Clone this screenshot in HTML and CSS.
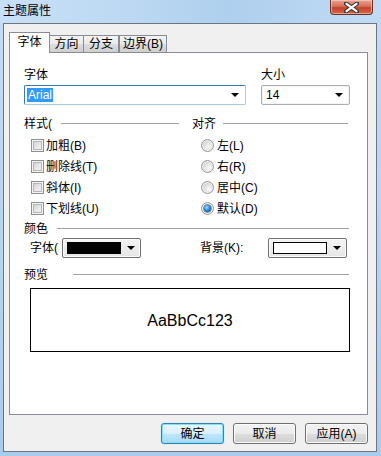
FILE: index.html
```html
<!DOCTYPE html>
<html>
<head>
<meta charset="utf-8">
<link rel="stylesheet" href="styles.css">
</head>
<body>
<div class="window">
  <div class="titlebar">
    <span class="title">主题属性</span>
    <div class="close"><svg width="15" height="11" viewBox="0 0 15 11"><path d="M2 1.5 L13 9.5 M13 1.5 L2 9.5" stroke="#3a3a3a" stroke-width="4.2" stroke-linecap="round"/><path d="M2.5 1.8 L12.5 9.2 M12.5 1.8 L2.5 9.2" stroke="#ffffff" stroke-width="2.2" stroke-linecap="round"/></svg></div>
  </div>
  <div class="client">
    <div class="tabs">
      <div class="tab active">字体</div>
      <div class="tab t2">方向</div>
      <div class="tab t3">分支</div>
      <div class="tab t4">边界(B)</div>
    </div>
    <div class="panel">
      <div class="row1">
        <div class="field">
          <div class="label">字体</div>
          <div class="combo focus"><span class="sel">Arial</span><span class="arrow"></span></div>
        </div>
        <div class="field">
          <div class="label">大小</div>
          <div class="combo"><span class="val">14</span><span class="arrow"></span></div>
        </div>
      </div>
      <div class="row2">
        <div class="col left">
          <div class="header"><span>样式(</span><i class="rule"></i></div>
          <div class="opt"><span class="check"></span>加粗(B)</div>
          <div class="opt"><span class="check"></span>删除线(T)</div>
          <div class="opt"><span class="check"></span>斜体(I)</div>
          <div class="opt"><span class="check"></span>下划线(U)</div>
        </div>
        <div class="col right">
          <div class="header"><span>对齐</span><i class="rule"></i></div>
          <div class="opt"><span class="radio"></span>左(L)</div>
          <div class="opt"><span class="radio"></span>右(R)</div>
          <div class="opt"><span class="radio"></span>居中(C)</div>
          <div class="opt"><span class="radio on"></span>默认(D)</div>
        </div>
      </div>
      <div class="header wide"><span>颜色</span><i class="rule"></i></div>
      <div class="colors">
        <div class="cgroup left">
          <span class="clabel">字体(</span>
          <div class="ccombo"><span class="swatch black"></span><span class="arrow"></span></div>
        </div>
        <div class="cgroup right">
          <span class="clabel">背景(K):</span>
          <div class="ccombo"><span class="swatch white"></span><span class="arrow"></span></div>
        </div>
      </div>
      <div class="header preview-h"><span>预览</span><i class="rule"></i></div>
      <div class="preview">AaBbCc123</div>
    </div>
    <div class="buttons">
      <div class="btn default">确定</div>
      <div class="btn">取消</div>
      <div class="btn">应用(A)</div>
    </div>
  </div>
</div>
</body>
</html>
```
FILE: styles.css
```css
* { box-sizing: border-box; }
html, body { margin: 0; padding: 0; }
body {
  width: 381px;
  height: 456px;
  overflow: hidden;
  font-family: "Liberation Sans", "Noto Sans CJK SC", sans-serif;
  font-size: 12px;
  color: #000;
  background: linear-gradient(180deg, #c3dcf4 0%, #bcd6f1 40%, #a9cbec 100%);
}
.window { width: 381px; height: 456px; display: flex; flex-direction: column; }
.titlebar {
  height: 23px;
  display: flex;
  justify-content: space-between;
  align-items: flex-start;
  background: linear-gradient(90deg, #c8e0f7 0%, #bcd8f2 35%, #aecfee 60%, #c2dbf4 100%);
}
.title { margin: 3px 0 0 3px; line-height: 16px; font-size: 12px; }
.close {
  width: 43px; height: 15px; margin-right: 8px;
  border: 1px solid #6b2d25; border-top: none;
  border-radius: 0 0 4px 4px;
  background: linear-gradient(180deg, #e6a493 0%, #d8705a 45%, #c3432a 55%, #d3654b 100%);
  box-shadow: inset 0 0 0 1px rgba(255,220,210,0.55);
  display: flex; align-items: center; justify-content: center;
}
.client {
  margin: 0 4px 4px 3px;
  height: 429px;
  border: 1px solid #6d7580;
  background: #f0f0f0;
  padding: 8px 8px 0 5px;
  display: flex; flex-direction: column;
}
.tabs { display: flex; align-items: flex-end; height: 21px; margin-bottom: -1px; position: relative; z-index: 1; }
.tab {
  height: 18px;
  border: 1px solid #898c95;
  background: linear-gradient(180deg, #f3f3f3 0%, #ebebeb 50%, #dddddd 51%, #cfcfcf 100%);
  display: flex; align-items: center; justify-content: center;
  line-height: 14px;
  padding-bottom: 1px;
}
.tab.active {
  height: 21px; width: 41px;
  background: #fff;
  border-bottom: none;
  position: relative; z-index: 2;
  padding-bottom: 2px;
}
.t2 { width: 35px; margin-left: -1px; }
.t3 { width: 36px; margin-left: -1px; }
.t4 { width: 48px; margin-left: 0; }
.panel {
  height: 363px;
  border: 1px solid #898c95;
  background: #fff;
  padding: 15px 17px 0 14px;
  display: flex; flex-direction: column;
}
.row1 { display: grid; grid-template-columns: 222px 1fr; column-gap: 15px; }
.label { line-height: 14px; height: 14px; margin-bottom: 3px; }
.combo {
  height: 20px;
  border: 1px solid #abadb3;
  border-top-color: #abadb3;
  border-radius: 2px;
  background: #fff;
  display: flex; align-items: center;
  padding: 0 6px 0 2px;
  box-shadow: inset 0 0 0 1px #f2f4f7;
}
.combo.focus { border-color: #3d7bad; border-bottom-color: #a4c9e3; border-right-color: #a4c9e3; box-shadow: none; }
.sel { background: #3399ff; color: #fff; padding: 0 1px; line-height: 14px; }
.val { padding-left: 2px; line-height: 14px; }
.arrow {
  margin-left: auto;
  width: 0; height: 0;
  border-left: 4px solid transparent;
  border-right: 4px solid transparent;
  border-top: 4px solid #000;
}
.row2 { display: grid; grid-template-columns: 168px 1fr; margin-top: 12px; }
.header { display: flex; align-items: center; height: 14px; line-height: 14px; }
.header span { white-space: nowrap; }
.rule { flex: 1; height: 1px; background: #a0a0a0; margin-top: -2px; }
.left .header .rule { margin-left: 9px; margin-right: 13px; }
.right .header .rule { margin-left: 7px; margin-right: 2px; }
.left .header + .opt, .right .header + .opt { margin-top: 4px; }
.opt { height: 21px; display: flex; align-items: center; line-height: 14px; }
.left .opt { padding-left: 7px; }
.right .opt { padding-left: 9px; }
.check {
  width: 13px; height: 13px; margin-right: 2px;
  border: 1px solid #8e8f8f;
  background: linear-gradient(135deg, #c9c9c9 0%, #e6e6e6 50%, #f7f7f7 100%);
  box-shadow: inset 0 0 0 1px #f4f4f4, inset 0 0 0 2px #b7b7b7;
}
.radio {
  width: 13px; height: 13px; margin-right: 3px;
  border-radius: 50%;
  border: 1px solid #9a9a9a;
  background: radial-gradient(circle at 65% 65%, #fbfbfb 0%, #e2e2e2 45%, #bdbdbd 100%);
  box-shadow: inset 0 0 0 1px #f0f0f0;
  position: relative;
}
.radio.on::after {
  content: ""; position: absolute; left: 2px; top: 2px; width: 7px; height: 7px; border-radius: 50%;
  background: radial-gradient(circle at 40% 35%, #9de0ff 0%, #2b8ad8 45%, #0d3f78 100%);
  box-shadow: 0 0 0 0.5px #1b3f66;
}
.header.wide { margin-top: 3px; }
.header.wide .rule { margin-left: 9px; margin-right: 1px; }
.colors { display: grid; grid-template-columns: 168px 1fr; margin-top: 2px; height: 20px; }
.cgroup { display: flex; align-items: center; }
.cgroup.left { padding-left: 6px; }
.cgroup.right { padding-left: 8px; padding-right: 3px; }
.cgroup.right .ccombo { margin-left: auto; }
.clabel { line-height: 14px; white-space: nowrap; }
.cgroup.left .clabel { width: 32px; }
.ccombo {
  width: 79px; height: 20px;
  border: 1px solid #707070;
  border-radius: 2px;
  background: linear-gradient(180deg, #f4f4f4 0%, #e6e6e6 100%);
  display: flex; align-items: center;
  padding: 0 5px 0 4px;
  box-shadow: inset 0 0 0 1px #fbfbfb;
}
.swatch { width: 54px; height: 12px; border: 1px solid #000; }
.swatch.black { background: #000; }
.swatch.white { background: #fff; }
.header.preview-h { margin-top: 10px; }
.header.preview-h .rule { margin-left: 25px; margin-right: 1px; }
.preview {
  margin: 6px 0 0 6px;
  height: 64px;
  border: 1px solid #000;
  display: flex; align-items: center; justify-content: center;
  font-family: "Liberation Sans", Arial, sans-serif;
  font-size: 16px;
  padding-top: 2px;
}
.buttons { display: flex; justify-content: flex-end; margin-top: 8px; gap: 9px; padding-right: 0; }
.btn {
  width: 63px; height: 21px;
  border: 1px solid #707070;
  border-radius: 3px;
  background: linear-gradient(180deg, #f2f2f2 0%, #ebebeb 50%, #dddddd 51%, #cfcfcf 100%);
  box-shadow: inset 0 0 0 1px #fcfcfc;
  display: flex; align-items: center; justify-content: center;
  line-height: 14px;
}
.btn.default {
  border-color: #3c7fb1;
  background: linear-gradient(180deg, #eaf6fd 0%, #d9f0fc 50%, #bee6fd 51%, #a7d9f5 100%);
  box-shadow: inset 0 0 0 1px #7ee3fc, 0 0 1px #5cc7f2;
}
```
